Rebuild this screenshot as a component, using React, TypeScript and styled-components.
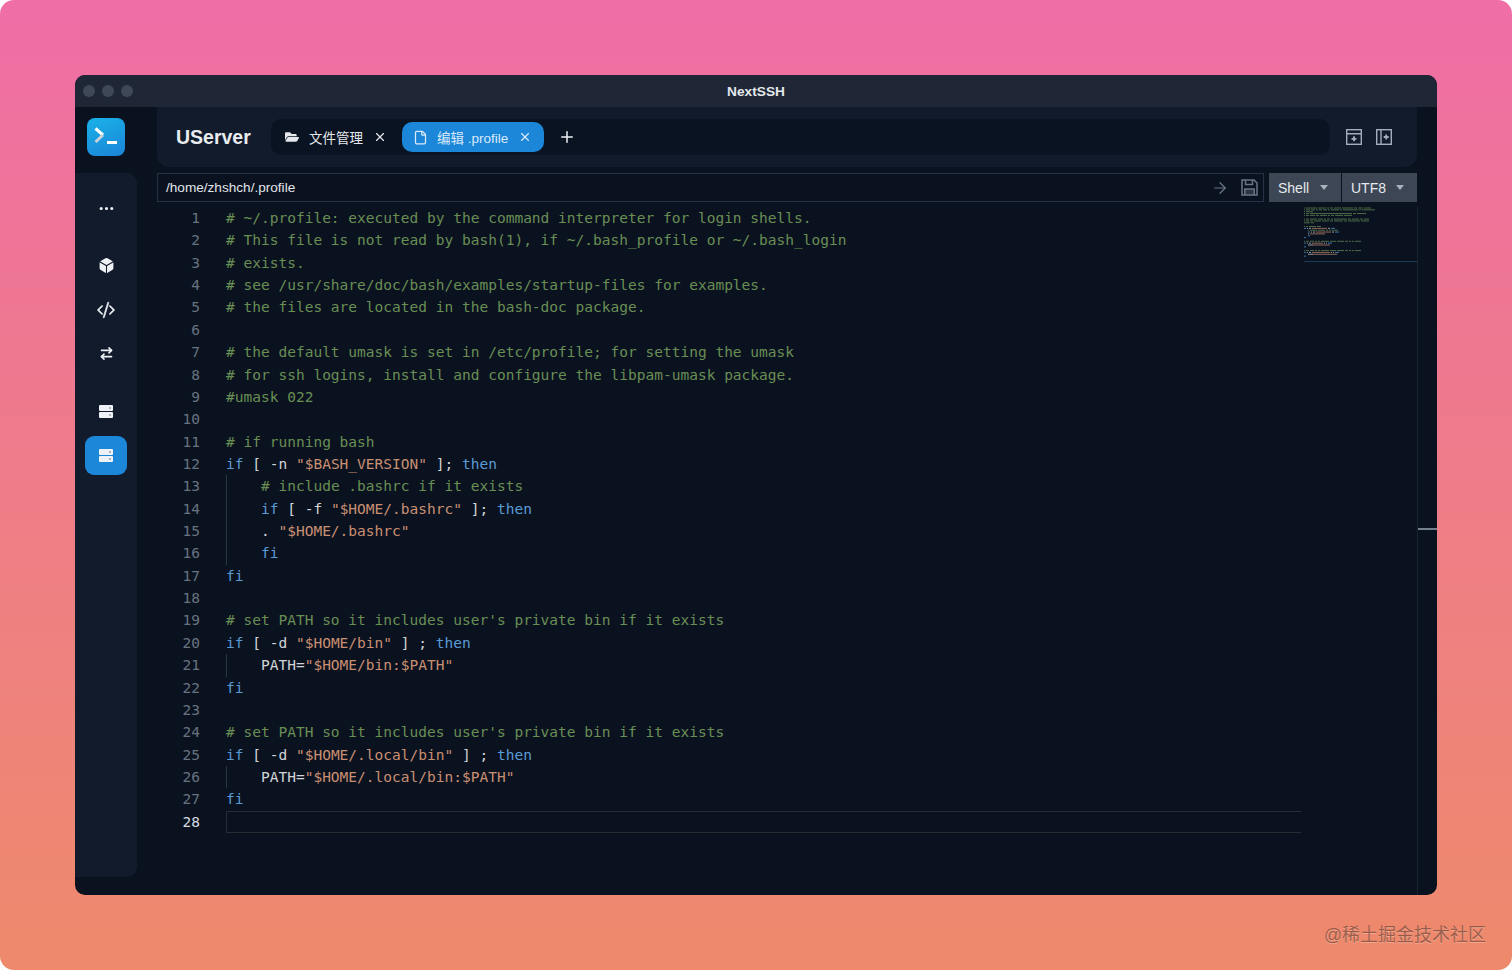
import React from 'react';
import styled, { createGlobalStyle } from 'styled-components';
import { ArrowRight, ArrowRightLeft, File, Plus, X } from 'lucide-react';
import { FaFolderOpen } from 'react-icons/fa';
import { IoCube } from 'react-icons/io5';
import { BsCodeSlash, BsThreeDots } from 'react-icons/bs';

type Kind = 'c' | 'k' | 's' | 'p';
type Token = [Kind, string];

interface CodeRow {
  tokens: Token[];
  guide?: boolean;
}

const comment = (text: string): CodeRow => ({ tokens: [['c', text]] });
const blank: CodeRow = { tokens: [] };

const codeRows: CodeRow[] = [
  comment('# ~/.profile: executed by the command interpreter for login shells.'),
  comment('# This file is not read by bash(1), if ~/.bash_profile or ~/.bash_login'),
  comment('# exists.'),
  comment('# see /usr/share/doc/bash/examples/startup-files for examples.'),
  comment('# the files are located in the bash-doc package.'),
  blank,
  comment('# the default umask is set in /etc/profile; for setting the umask'),
  comment('# for ssh logins, install and configure the libpam-umask package.'),
  comment('#umask 022'),
  blank,
  comment('# if running bash'),
  { tokens: [['k', 'if'], ['p', ' [ -n '], ['s', '"$BASH_VERSION"'], ['p', ' ]; '], ['k', 'then']] },
  { guide: true, tokens: [['p', '    '], ['c', '# include .bashrc if it exists']] },
  { guide: true, tokens: [['p', '    '], ['k', 'if'], ['p', ' [ -f '], ['s', '"$HOME/.bashrc"'], ['p', ' ]; '], ['k', 'then']] },
  { guide: true, tokens: [['p', '    . '], ['s', '"$HOME/.bashrc"']] },
  { guide: true, tokens: [['p', '    '], ['k', 'fi']] },
  { tokens: [['k', 'fi']] },
  blank,
  comment("# set PATH so it includes user's private bin if it exists"),
  { tokens: [['k', 'if'], ['p', ' [ -d '], ['s', '"$HOME/bin"'], ['p', ' ] ; '], ['k', 'then']] },
  { guide: true, tokens: [['p', '    PATH='], ['s', '"$HOME/bin:$PATH"']] },
  { tokens: [['k', 'fi']] },
  blank,
  comment("# set PATH so it includes user's private bin if it exists"),
  { tokens: [['k', 'if'], ['p', ' [ -d '], ['s', '"$HOME/.local/bin"'], ['p', ' ] ; '], ['k', 'then']] },
  { guide: true, tokens: [['p', '    PATH='], ['s', '"$HOME/.local/bin:$PATH"']] },
  { tokens: [['k', 'fi']] },
  blank,
];

const tokenColors: Record<Kind, string> = {
  c: '#698e54',
  k: '#5a9bd5',
  s: '#c98f72',
  p: '#d2d5d8',
};

const GlobalStyle = createGlobalStyle`
  html, body {
    margin: 0;
    background: #fff;
    font-family: "Liberation Sans", Arial, sans-serif;
  }
`;

const Page = styled.div`
  position: relative;
  box-sizing: border-box;
  width: 1512px;
  height: 970px;
  padding: 75px;
  border-radius: 14px;
  overflow: hidden;
  background: linear-gradient(180deg, #ef6ea6 0%, #ee8a6b 100%);
`;

const Watermark = styled.div`
  position: absolute;
  right: 26px;
  bottom: 24px;
  font-family: "Liberation Sans", "Noto Sans CJK SC", sans-serif;
  font-size: 18px;
  color: rgba(120, 70, 55, 0.72);
  text-shadow: 0 1px 0 rgba(255, 220, 200, 0.4);
`;

const Window = styled.div`
  display: flex;
  flex-direction: column;
  height: 100%;
  border-radius: 10px;
  overflow: hidden;
  background: #0a1220;
`;

const TitleBar = styled.div`
  position: relative;
  flex: none;
  display: flex;
  align-items: center;
  justify-content: center;
  height: 32px;
  background: #1f2736;
`;

const Lights = styled.div`
  position: absolute;
  left: 8px;
  display: flex;
  gap: 7px;
`;

const Light = styled.span`
  width: 12px;
  height: 12px;
  border-radius: 50%;
  background: #3e4857;
`;

const WindowTitle = styled.div`
  font-size: 13.7px;
  font-weight: 700;
  color: #e4e7ec;
`;

const Body = styled.div`
  flex: 1;
  display: flex;
  min-height: 0;
`;

const Rail = styled.div`
  flex: none;
  display: flex;
  flex-direction: column;
  width: 62px;
`;

const LogoSlot = styled.div`
  flex: none;
  display: flex;
  justify-content: center;
  align-items: flex-start;
  height: 66px;
  padding-top: 11px;
  box-sizing: border-box;
`;

const Logo = styled.div`
  width: 38px;
  height: 38px;
  border-radius: 8px;
  background: linear-gradient(160deg, #1ab2e8 0%, #1b84d8 100%);
  display: flex;
  align-items: center;
  justify-content: center;
`;

const SideNav = styled.div`
  flex: 1;
  display: flex;
  flex-direction: column;
  align-items: center;
  margin-bottom: 18px;
  padding-top: 16px;
  border-radius: 0 10px 10px 0;
  background: #111b2c;
`;

const NavItem = styled.div<{ $active?: boolean; $gap?: number }>`
  display: flex;
  align-items: center;
  justify-content: center;
  width: 42px;
  height: 39px;
  margin-top: ${(p) => p.$gap ?? 5}px;
  border-radius: 9px;
  color: #eef1f5;
  background: ${(p) => (p.$active ? '#1c86d8' : 'transparent')};
`;

const Main = styled.div`
  flex: 1;
  display: flex;
  flex-direction: column;
  min-width: 0;
  margin-left: 20px;
`;

const TopBar = styled.div`
  flex: none;
  display: flex;
  align-items: center;
  height: 60px;
  padding: 0 25px 0 19px;
  box-sizing: border-box;
  border-radius: 0 0 12px 12px;
  background: #111b2c;
`;

const ServerName = styled.div`
  width: 95px;
  flex: none;
  font-size: 19.5px;
  font-weight: 700;
  color: #e9ecf0;
`;

const TabStrip = styled.div`
  flex: 1;
  display: flex;
  align-items: center;
  height: 36px;
  margin-right: 16px;
  padding-left: 14px;
  border-radius: 10px;
  background: #0a1322;
`;

const Tab = styled.div<{ $active?: boolean }>`
  display: flex;
  align-items: center;
  height: 30px;
  padding: 0 ${(p) => (p.$active ? '12px 0 11px' : '0')};
  margin-left: ${(p) => (p.$active ? '15px' : '0')};
  border-radius: 10px;
  font-size: 13.5px;
  font-family: "Liberation Sans", "Noto Sans CJK SC", sans-serif;
  color: ${(p) => (p.$active ? '#dbeaf8' : '#e4e7ec')};
  background: ${(p) => (p.$active ? '#1c86d8' : 'transparent')};
  svg:first-child {
    margin-right: ${(p) => (p.$active ? 9 : 10)}px;
  }
  svg:last-child {
    margin-left: ${(p) => (p.$active ? 10 : 10)}px;
  }
`;

const AddTab = styled.div`
  display: flex;
  margin-left: 14px;
  color: #eef1f5;
`;

const LayoutTools = styled.div`
  flex: none;
  display: flex;
  gap: 14px;
  color: #a3adbb;
`;

const PathRow = styled.div`
  flex: none;
  display: flex;
  height: 29px;
  margin-top: 6px;
`;

const PathField = styled.div`
  flex: 1;
  display: flex;
  align-items: center;
  gap: 12px;
  margin-right: 4px;
  padding: 0 5px 0 8px;
  border: 1px solid #263346;
  color: #6b7685;
`;

const PathText = styled.div`
  flex: 1;
  font-size: 13.6px;
  color: #e2e5ea;
`;

const Picker = styled.div<{ $width: number }>`
  flex: none;
  box-sizing: border-box;
  display: flex;
  align-items: center;
  justify-content: space-between;
  width: ${(p) => p.$width}px;
  margin-left: 1px;
  padding: 0 13px 0 9px;
  font-size: 14px;
  color: #e6e9ed;
  background: #3c4655;
`;

const Caret = styled.span`
  width: 0;
  height: 0;
  border-left: 4.5px solid transparent;
  border-right: 4.5px solid transparent;
  border-top: 5px solid #aab2bd;
`;

const Editor = styled.div`
  flex: 1;
  display: flex;
  min-height: 0;
  margin-top: 5px;
  font-family: "DejaVu Sans Mono", "Liberation Mono", monospace;
  font-size: 14.52px;
`;

const Gutter = styled.div`
  flex: none;
  width: 43px;
  text-align: right;
  color: #68727f;
`;

const LineNumber = styled.div<{ $current?: boolean }>`
  height: 22.37px;
  line-height: 22.37px;
  color: ${(p) => (p.$current ? '#d6dae0' : '#68727f')};
`;

const Code = styled.div`
  flex: none;
  width: 1075px;
  margin-left: 26px;
`;

const CodeLine = styled.div<{ $guide?: boolean; $current?: boolean }>`
  box-sizing: border-box;
  height: 22.37px;
  line-height: 22.37px;
  white-space: pre;
  box-shadow: ${(p) => (p.$guide ? 'inset 1px 0 0 #2b3544' : 'none')};
  border: ${(p) => (p.$current ? '1.5px solid #262d33' : 'none')};
  border-right: none;
`;

const Piece = styled.span<{ $kind: Kind }>`
  color: ${(p) => tokenColors[p.$kind]};
`;

const Minimap = styled.div`
  flex: none;
  width: 113px;
  height: 54px;
  margin-left: 3px;
  border-bottom: 1px solid #1d3a52;
  line-height: 0;
`;

const Ruler = styled.div`
  flex: none;
  box-sizing: border-box;
  width: 20px;
  margin-top: 100px;
  padding-top: 321px;
  border-left: 1px solid #192332;
`;

const RulerMark = styled.div`
  height: 2px;
  background: #75808e;
`;

const ServerIcon: React.FC = () => (
  <svg width="14" height="13" viewBox="0 0 14 13" fill="currentColor">
    <path d="M1 0h12a1 1 0 0 1 1 1v4a1 1 0 0 1-1 1H1a1 1 0 0 1-1-1V1a1 1 0 0 1 1-1zm0 7h12a1 1 0 0 1 1 1v4a1 1 0 0 1-1 1H1a1 1 0 0 1-1-1V8a1 1 0 0 1 1-1z" />
    <path d="M10 2.5h2v1h-2zM10 9.5h2v1h-2z" fill="#6f7a88" />
  </svg>
);

const LogoMark: React.FC = () => (
  <svg width="28" height="24" viewBox="0 0 28 24" fill="none" strokeWidth="3">
    <path d="M3.5 3.5 11 10" stroke="#ffffff" />
    <path d="M11 10 3.5 17" stroke="#c9d3dc" />
    <path d="M15 17.5h10" stroke="#ffffff" />
  </svg>
);

const PanelBelowIcon: React.FC = () => (
  <svg width="16" height="16" viewBox="0 0 16 16" fill="none" stroke="currentColor" strokeWidth="1.4">
    <rect x="0.7" y="0.7" width="14.6" height="14.6" />
    <path d="M1 4.7h14" />
    <path d="M8 7.3v5M5.5 9.8h5" strokeWidth="1.8" />
  </svg>
);

const PanelRightIcon: React.FC = () => (
  <svg width="16" height="16" viewBox="0 0 16 16" fill="none" stroke="currentColor" strokeWidth="1.4">
    <rect x="0.7" y="0.7" width="14.6" height="14.6" />
    <path d="M5 1v14" />
    <path d="M10.2 5.5v5M7.7 8h5" strokeWidth="1.8" />
  </svg>
);

const FloppyIcon: React.FC = () => (
  <svg width="17" height="17" viewBox="0 0 17 17" fill="none" stroke="currentColor" strokeWidth="1.5">
    <path d="M1 1h12l3 3v12H1z" />
    <path d="M4.5 1v4.5h7V1" />
    <path d="M3.8 16v-6h9.4v6" fill="currentColor" fillOpacity="0.35" />
  </svg>
);

// one rect per word, so the minimap keeps the gaps of the real text
const MinimapDrawing: React.FC = () => (
  <svg width="113" height="54" viewBox="0 0 113 54">
    {codeRows.map((row, rowIndex) => {
      let column = 0;
      return row.tokens.map(([kind, text], tokenIndex) => {
        const start = column;
        column += text.length;
        return Array.from(text.matchAll(/\S+/g)).map((word) => (
          <rect
            key={`${rowIndex}-${tokenIndex}-${word.index}`}
            x={start + (word.index ?? 0)}
            y={rowIndex * 1.85 + 0.5}
            width={word[0].length}
            height={1}
            fill={tokenColors[kind]}
            opacity={0.7}
          />
        ));
      });
    })}
  </svg>
);

const App: React.FC = () => {
  return (
    <Page>
      <GlobalStyle />
      <Window>
        <TitleBar>
          <Lights>
            <Light />
            <Light />
            <Light />
          </Lights>
          <WindowTitle>NextSSH</WindowTitle>
        </TitleBar>
        <Body>
          <Rail>
            <LogoSlot>
              <Logo>
                <LogoMark />
              </Logo>
            </LogoSlot>
            <SideNav>
              <NavItem $gap={0}>
                <BsThreeDots size={17} />
              </NavItem>
              <NavItem $gap={18}>
                <IoCube size={17} />
              </NavItem>
              <NavItem>
                <BsCodeSlash size={18} stroke="currentColor" strokeWidth={0.6} />
              </NavItem>
              <NavItem>
                <ArrowRightLeft size={15} strokeWidth={2.6} />
              </NavItem>
              <NavItem $gap={19}>
                <ServerIcon />
              </NavItem>
              <NavItem $active $gap={5}>
                <ServerIcon />
              </NavItem>
            </SideNav>
          </Rail>
          <Main>
            <TopBar>
              <ServerName>UServer</ServerName>
              <TabStrip>
                <Tab>
                  <FaFolderOpen size={14} />
                  文件管理
                  <X size={14} strokeWidth={2} />
                </Tab>
                <Tab $active>
                  <File size={15} strokeWidth={2} />
                  编辑 .profile
                  <X size={14} strokeWidth={2} />
                </Tab>
                <AddTab>
                  <Plus size={18} strokeWidth={2} />
                </AddTab>
              </TabStrip>
              <LayoutTools>
                <PanelBelowIcon />
                <PanelRightIcon />
              </LayoutTools>
            </TopBar>
            <PathRow>
              <PathField>
                <PathText>/home/zhshch/.profile</PathText>
                <ArrowRight size={18} strokeWidth={1.6} />
                <FloppyIcon />
              </PathField>
              <Picker $width={72}>
                Shell
                <Caret />
              </Picker>
              <Picker $width={75}>
                UTF8
                <Caret />
              </Picker>
            </PathRow>
            <Editor>
              <Gutter>
                {codeRows.map((_, index) => (
                  <LineNumber key={index} $current={index === codeRows.length - 1}>
                    {index + 1}
                  </LineNumber>
                ))}
              </Gutter>
              <Code>
                {codeRows.map((row, index) => (
                  <CodeLine key={index} $guide={row.guide} $current={index === codeRows.length - 1}>
                    {row.tokens.map(([kind, text], tokenIndex) => (
                      <Piece key={tokenIndex} $kind={kind}>
                        {text}
                      </Piece>
                    ))}
                  </CodeLine>
                ))}
              </Code>
              <Minimap>
                <MinimapDrawing />
              </Minimap>
            </Editor>
          </Main>
          <Ruler>
            <RulerMark />
          </Ruler>
        </Body>
      </Window>
      <Watermark>@稀土掘金技术社区</Watermark>
    </Page>
  );
};

export default App;
